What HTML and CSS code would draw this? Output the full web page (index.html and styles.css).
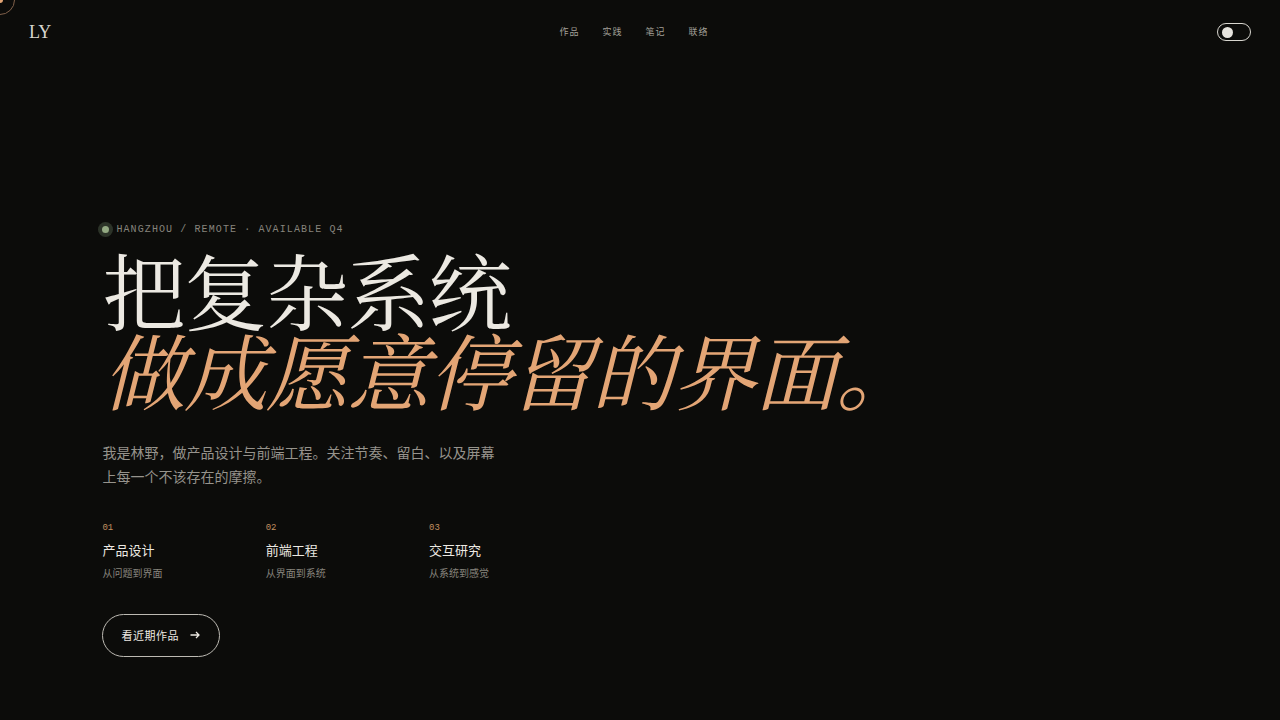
FILE: index.html
```html
<!DOCTYPE html>
<html lang="zh-CN">
<head>
<meta charset="utf-8">
<meta name="viewport" content="width=device-width, initial-scale=1">
<title>LY</title>
<link rel="stylesheet" href="styles.css">
</head>
<body class="page">
<div class="cursor" aria-hidden="true"><span class="cursor-dot"></span></div>
<header class="topbar">
  <a class="logo" href="#">LY</a>
  <nav class="nav">
    <a href="#work">作品</a>
    <a href="#practice">实践</a>
    <a href="#notes">笔记</a>
    <a href="#contact">联络</a>
  </nav>
  <button class="toggle" type="button" aria-label="切换主题"><span class="knob"></span></button>
</header>
<main class="hero">
  <p class="status"><span class="status-dot"></span>HANGZHOU / REMOTE · AVAILABLE Q4</p>
  <h1 class="headline">把复杂系统<br><em>做成愿意停留的界面。</em></h1>
  <p class="intro">我是林野，做产品设计与前端工程。关注节奏、留白、以及屏幕上每一个不该存在的摩擦。</p>
  <ul class="skills">
    <li><span class="num">01</span><strong class="skill">产品设计</strong><span class="desc">从问题到界面</span></li>
    <li><span class="num">02</span><strong class="skill">前端工程</strong><span class="desc">从界面到系统</span></li>
    <li><span class="num">03</span><strong class="skill">交互研究</strong><span class="desc">从系统到感觉</span></li>
  </ul>
  <a class="cta" href="#work">看近期作品
    <svg class="arrow" viewBox="0 0 12 12" aria-hidden="true"><path d="M1.500 6h8.500M7 3l3 3-3 3"/></svg>
  </a>
</main>
</body>
</html>
```
FILE: styles.css
```css
* { box-sizing: border-box; }
.page {
  margin: 0;
  min-height: 100vh;
  display: flex;
  flex-direction: column;
  background: #0c0c0a;
  color: #ece9e2;
  font-family: "Noto Sans CJK SC", sans-serif;
  overflow-x: hidden;
}
a { color: inherit; text-decoration: none; }
.cursor {
  position: absolute;
  left: -15px;
  top: -15px;
  width: 30px;
  height: 30px;
  border: 1px solid #80604a;
  border-radius: 50%;
  display: grid;
  place-items: center;
}
.cursor-dot { width: 6px; height: 6px; border-radius: 50%; background: #e3a575; }
.topbar {
  display: flex;
  align-items: center;
  justify-content: space-between;
  height: 64px;
  padding: 0 29px;
}
.logo {
  font-family: "Liberation Serif", serif;
  font-size: 18px;
  line-height: 20px;
  color: #d8d6cf;
}
.nav {
  display: flex;
  gap: 23px;
  font-size: 9px;
  line-height: 16px;
  letter-spacing: 1px;
  color: #a3a099;
}
.toggle {
  width: 34px;
  height: 18px;
  padding: 0 4px;
  display: flex;
  align-items: center;
  border: 1px solid #d8d6cf;
  border-radius: 9px;
  background: transparent;
}
.knob { width: 11px; height: 11px; border-radius: 50%; background: #e6e4de; }
.hero { padding: 155px 8vw 64px; }
.status {
  margin: 0;
  display: flex;
  align-items: center;
  gap: 7px;
  font: 10px/21px "Liberation Mono", monospace;
  letter-spacing: 0.11em;
  color: #87847d;
}
.status-dot {
  width: 7px;
  height: 7px;
  border-radius: 50%;
  background: #93a982;
  box-shadow: 0 0 0 4px #2c3328;
}
.headline {
  margin: 9px 0 0;
  font-family: "Noto Serif CJK SC", serif;
  font-size: 6.5vw;
  font-weight: 400;
  line-height: 0.96;
  letter-spacing: -0.02em;
}
.headline em { color: #e3a575; }
.intro {
  margin: 31px 0 0;
  max-width: 404px;
  font-size: 14px;
  line-height: 24px;
  color: #96938c;
}
.skills {
  list-style: none;
  margin: 32px 0 0;
  padding: 0;
  max-width: 490px;
  display: grid;
  grid-template-columns: repeat(3, 1fr);
}
.skills li { display: flex; flex-direction: column; }
.num { font: 9px/16px "Liberation Mono", monospace; color: #c08f60; }
.skill { margin-top: 4px; font-size: 13px; font-weight: 400; line-height: 20px; }
.desc { margin-top: 4px; font-size: 10px; line-height: 18px; color: #87847d; }
.cta {
  display: inline-flex;
  align-items: center;
  gap: 10px;
  margin-top: 32px;
  height: 43px;
  padding: 0 18px;
  border: 1px solid #bdbab3;
  border-radius: 22px;
  font-size: 11px;
  line-height: 16px;
  letter-spacing: 0.05em;
}
.arrow { width: 12px; height: 12px; fill: none; stroke: currentColor; stroke-width: 1.3; }
```
